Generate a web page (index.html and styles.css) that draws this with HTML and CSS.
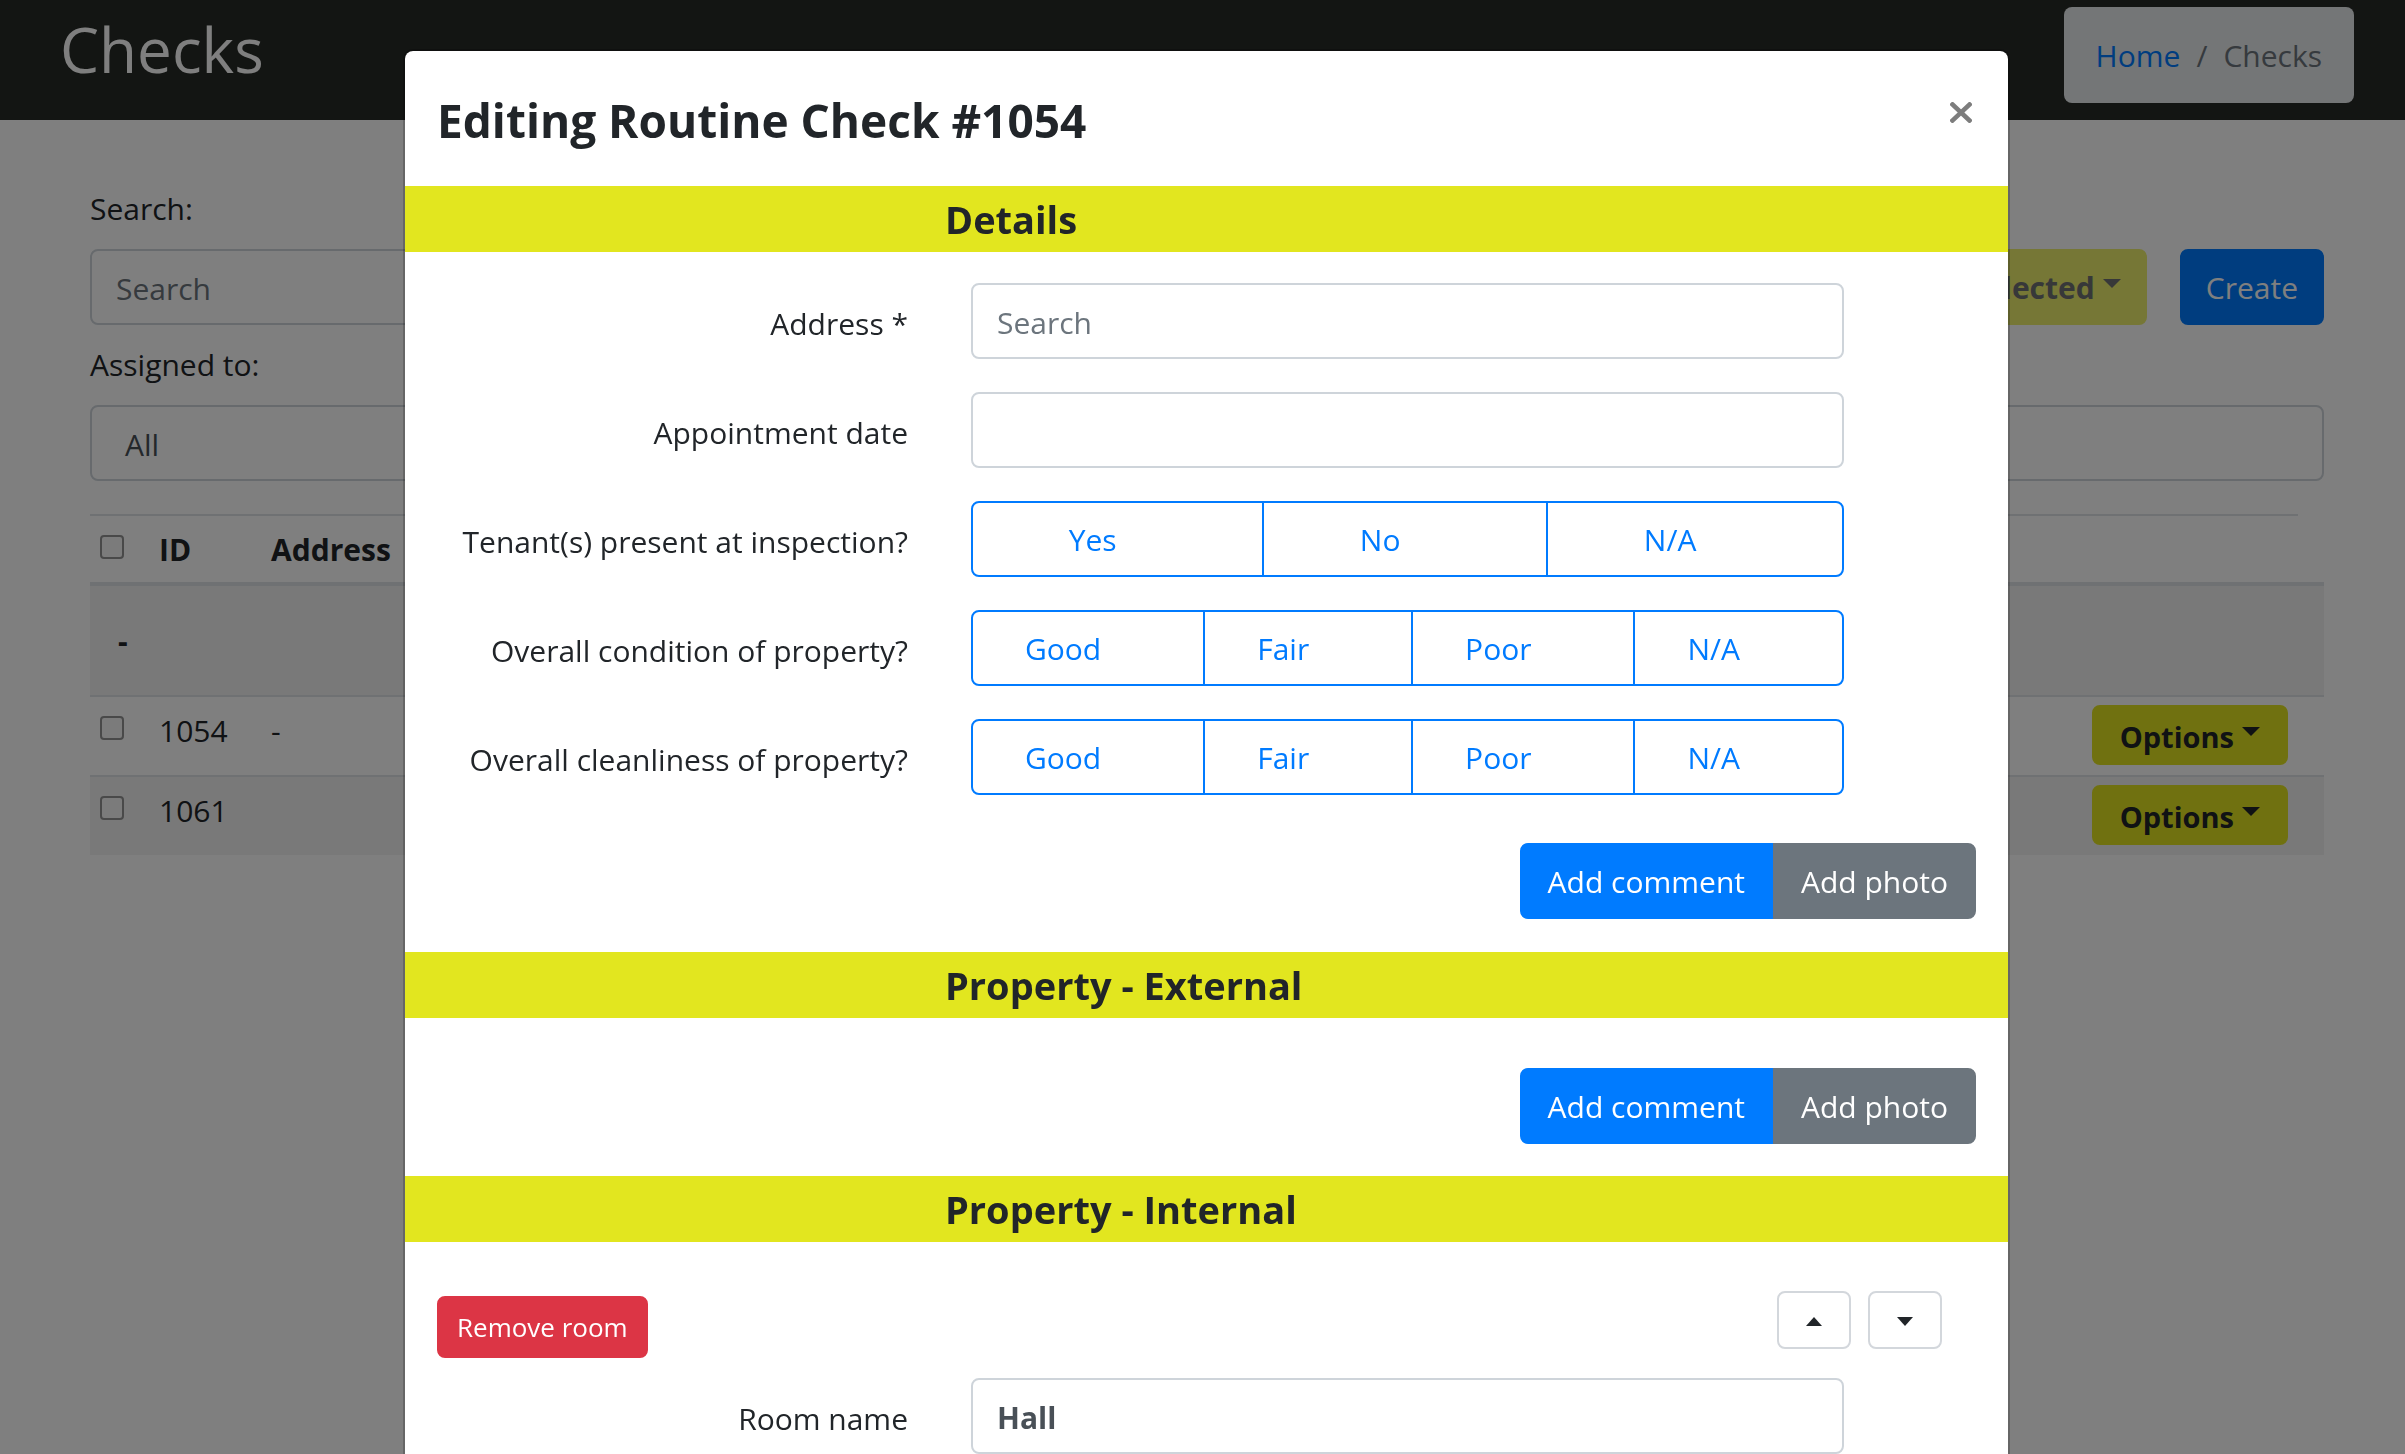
FILE: index.html
```html
<!DOCTYPE html>
<html lang="en">
<head>
<meta charset="utf-8">
<title>Checks</title>
<link rel="stylesheet" href="styles.css">
</head>
<body>
<div class="page">
  <nav class="navbar">
    <span class="brand">Checks</span>
    <ol class="breadcrumb">
      <li><a href="#">Home</a></li>
      <li class="sep">/</li>
      <li class="active">Checks</li>
    </ol>
  </nav>

  <main class="content">
    <div class="filters">
      <div class="search-col">
        <label class="field-label">Search:</label>
        <div class="form-control placeholder">Search</div>
      </div>
      <div class="actions">
        <button class="btn btn-yellow is-disabled">With selected<span class="caret"></span></button>
        <button class="btn btn-blue">Create</button>
      </div>
    </div>
    <label class="field-label assigned">Assigned to:</label>
    <div class="form-control select-box">All</div>

    <div class="table-rule"></div>
    <table class="checks-table">
      <colgroup>
        <col class="c-check"><col class="c-id"><col class="c-addr"><col><col class="c-opt">
      </colgroup>
      <thead>
        <tr><th><span class="checkbox"></span></th><th>ID</th><th>Address</th><th></th><th></th></tr>
      </thead>
      <tbody>
        <tr class="filter-row striped"><td class="dash">-</td><td></td><td></td><td></td><td></td></tr>
        <tr><td><span class="checkbox"></span></td><td>1054</td><td>-</td><td></td><td class="opt"><button class="btn-options">Options<span class="caret"></span></button></td></tr>
        <tr class="striped"><td><span class="checkbox"></span></td><td>1061</td><td></td><td></td><td class="opt"><button class="btn-options">Options<span class="caret"></span></button></td></tr>
      </tbody>
    </table>
  </main>
</div>

<div class="backdrop"></div>

<div class="modal">
  <div class="modal-header">
    <h4 class="modal-title">Editing Routine Check #1054</h4>
    <button class="close" aria-label="Close">
      <svg width="22" height="21" viewBox="0 0 22 21"><path d="M2.5 2.5 L19.5 18.5 M19.5 2.5 L2.5 18.5" stroke="#7d7d7d" stroke-width="4.5" stroke-linecap="square" fill="none"/></svg>
    </button>
  </div>

  <h5 class="band">Details</h5>
  <div class="section section-details">
    <div class="form-row">
      <label class="row-label">Address *</label>
      <div class="form-control placeholder">Search</div>
    </div>
    <div class="form-row">
      <label class="row-label">Appointment date</label>
      <div class="form-control"></div>
    </div>
    <div class="form-row">
      <label class="row-label">Tenant(s) present at inspection?</label>
      <div class="toggle-group">
        <span class="toggle">Yes</span><span class="toggle">No</span><span class="toggle">N/A</span>
      </div>
    </div>
    <div class="form-row">
      <label class="row-label">Overall condition of property?</label>
      <div class="toggle-group">
        <span class="toggle">Good</span><span class="toggle">Fair</span><span class="toggle">Poor</span><span class="toggle">N/A</span>
      </div>
    </div>
    <div class="form-row">
      <label class="row-label">Overall cleanliness of property?</label>
      <div class="toggle-group">
        <span class="toggle">Good</span><span class="toggle">Fair</span><span class="toggle">Poor</span><span class="toggle">N/A</span>
      </div>
    </div>
    <div class="btn-row">
      <div class="btn-group">
        <button class="btn btn-blue">Add comment</button><button class="btn btn-gray">Add photo</button>
      </div>
    </div>
  </div>

  <h5 class="band">Property - External</h5>
  <div class="section section-external">
    <div class="btn-row">
      <div class="btn-group">
        <button class="btn btn-blue">Add comment</button><button class="btn btn-gray">Add photo</button>
      </div>
    </div>
  </div>

  <h5 class="band">Property - Internal</h5>
  <div class="section section-internal">
    <div class="room-controls">
      <button class="btn btn-red">Remove room</button>
      <div class="move-btns">
        <button class="arrow-btn" aria-label="Move up"><span class="tri-up"></span></button>
        <button class="arrow-btn" aria-label="Move down"><span class="tri-down"></span></button>
      </div>
    </div>
    <div class="form-row room-row">
      <label class="row-label">Room name</label>
      <div class="form-control value-bold">Hall</div>
    </div>
  </div>
</div>
</body>
</html>
```

FILE: styles.css
```css
* { box-sizing: border-box; }

html, body {
  margin: 0;
  height: 100%;
  overflow: hidden;
}

body {
  font-family: "Open Sans", "Noto Sans", sans-serif;
  font-size: 30px;
  line-height: 48px;
  color: #212529;
  background: #fff;
}

button { font-family: inherit; }

/* ---------- navbar ---------- */
.navbar {
  height: 120px;
  background: #262a26;
  display: flex;
  justify-content: space-between;
  align-items: flex-start;
  padding: 0 51px 0 60px;
}
.brand {
  font-size: 62px;
  line-height: 62px;
  color: #fff;
  margin-top: 18px;
}
.breadcrumb {
  list-style: none;
  margin: 7px 0 0;
  padding: 25px 32px 23px;
  background: #e9ecef;
  border-radius: 8px;
  display: flex;
}
.breadcrumb a { color: #007bff; text-decoration: none; }
.breadcrumb .sep { color: #6c757d; padding: 0 16px; }
.breadcrumb .active { color: #6c757d; }

/* ---------- page content ---------- */
.content {
  margin: 0 81px 0 90px;
  padding-top: 65px;
}
.filters {
  display: flex;
  align-items: flex-end;
}
.search-col { flex: 1; }
.field-label {
  display: block;
  margin-bottom: 16px;
}
.assigned { margin-top: 16px; }

.form-control {
  display: flex;
  align-items: center;
  width: 100%;
  height: 76px;
  padding: 4px 24px 0;
  color: #495057;
  background: #fff;
  border: 2px solid #ced4da;
  border-radius: 8px;
}
.placeholder { color: #6c757d; }
.select-box { padding-left: 33px; }
.value-bold { font-weight: 700; }

.actions {
  display: flex;
  gap: 33px;
  margin-left: 32px;
}

.btn {
  display: inline-flex;
  align-items: center;
  justify-content: center;
  height: 76px;
  padding: 2px 24px 0;
  border: 2px solid transparent;
  border-radius: 8px;
  font-size: 30px;
  line-height: 48px;
  white-space: nowrap;
}
.btn-blue { background: #007bff; border-color: #007bff; color: #fff; }
.btn-gray { background: #6c757d; border-color: #6c757d; color: #fff; }
.btn-red {
  background: #dc3545;
  border-color: #dc3545;
  color: #fff;
  height: 62px;
  padding: 0 18px;
  font-size: 26px;
}
.btn-yellow {
  background: #e2e520;
  border-color: #e2e520;
  color: #212529;
  font-weight: 700;
}
.is-disabled { opacity: .65; }

.caret {
  display: inline-block;
  width: 0;
  height: 0;
  margin-left: 8px;
  border-top: 9px solid currentColor;
  border-left: 9.5px solid transparent;
  border-right: 9.5px solid transparent;
  position: relative;
  top: -5px;
}

/* ---------- table ---------- */
.table-rule {
  height: 2px;
  background: #dee2e6;
  margin: 33px 26px 0 0;
}
.checks-table {
  width: 100%;
  table-layout: fixed;
  border-collapse: separate;
  border-spacing: 0;
}
.c-check { width: 59px; }
.c-id { width: 112px; }
.c-addr { width: 400px; }
.c-opt { width: 320px; }

.checks-table th,
.checks-table td {
  padding: 10px 10px 8px;
  text-align: left;
  vertical-align: top;
  line-height: 48px;
}
.checks-table th {
  font-weight: 700;
  border-bottom: 4px solid #dee2e6;
}
.checks-table td { border-top: 2px solid #dee2e6; }
.checks-table .filter-row td {
  border-top: 0;
  height: 109px;
  padding-top: 0;
  padding-bottom: 0;
  vertical-align: middle;
}
.checks-table .dash {
  font-weight: 700;
  padding-left: 28px;
}
.striped td { background: #f2f2f2; }
.checks-table td.opt {
  text-align: right;
  padding-right: 36px;
  padding-top: 8px;
  padding-bottom: 10px;
}

.checkbox {
  display: inline-block;
  width: 24px;
  height: 24px;
  margin-top: 9px;
  vertical-align: top;
  border: 2px solid #939393;
  border-radius: 4px;
  background: #f6f6f6;
}

.btn-options {
  display: inline-flex;
  align-items: center;
  height: 60px;
  padding: 2px 26px 0;
  border: 2px solid #e0e220;
  border-radius: 8px;
  background: #e0e220;
  color: #212529;
  font-size: 29px;
  font-weight: 700;
}

/* ---------- backdrop + modal ---------- */
.backdrop {
  position: fixed;
  inset: 0;
  background: rgba(0, 0, 0, .5);
}

.modal {
  position: fixed;
  left: 403px;
  top: 49px;
  width: 1607px;
  height: 1500px;
  background: #fff;
  background-clip: padding-box;
  border: 2px solid rgba(0, 0, 0, .2);
  border-radius: 10px;
}

.modal-header {
  height: 135px;
  display: flex;
  justify-content: space-between;
  align-items: flex-start;
  padding: 39px 32px 0 32px;
}
.modal-title {
  margin: 0;
  font-size: 46px;
  line-height: 60px;
  font-weight: 700;
}
.close {
  margin: 12px 4px 0 0;
  padding: 0;
  border: 0;
  background: transparent;
  line-height: 0;
}

.band {
  margin: 0;
  height: 66px;
  background: #e2e61f;
  padding-left: 540px;
  font-size: 38px;
  line-height: 66px;
  font-weight: 700;
}

.section { padding: 0 32px; }
.section-details { padding-top: 31px; padding-bottom: 33px; }
.section-external { padding-top: 50px; padding-bottom: 32px; }
.section-internal { padding-top: 49px; }

.form-row {
  display: grid;
  grid-template-columns: 471px 873px;
  column-gap: 63px;
  margin-bottom: 33px;
}
.row-label {
  text-align: right;
  padding-top: 17px;
  white-space: nowrap;
}

.toggle-group {
  display: flex;
  width: 100%;
  height: 76px;
}
.toggle {
  flex: 1 1 auto;
  display: flex;
  align-items: center;
  justify-content: center;
  padding: 2px 24px 0;
  border: 2px solid #007bff;
  color: #007bff;
  background: #fff;
  margin-left: -2px;
  white-space: nowrap;
}
.toggle::after {
  content: "";
  flex: none;
  width: 50px;
}
.toggle:first-child { margin-left: 0; border-radius: 8px 0 0 8px; }
.toggle:last-child { border-radius: 0 8px 8px 0; }

.btn-row {
  display: flex;
  justify-content: flex-end;
}
.section-details .btn-row { padding-top: 15px; }
.btn-group { display: flex; }
.btn-group .btn { padding-left: 26px; padding-right: 26px; }
.btn-group .btn:first-child { border-radius: 8px 0 0 8px; }
.btn-group .btn:last-child { border-radius: 0 8px 8px 0; }

.room-controls {
  display: flex;
  justify-content: space-between;
  align-items: flex-start;
  height: 67px;
}
.room-controls .btn-red { margin-top: 5px; }
.move-btns {
  display: flex;
  gap: 17px;
  margin-right: 34px;
}
.arrow-btn {
  width: 74px;
  height: 58px;
  padding: 0;
  border: 2px solid #d3d7dc;
  border-radius: 8px;
  background: #fff;
  display: flex;
  align-items: center;
  justify-content: center;
}
.tri-up, .tri-down {
  width: 0;
  height: 0;
  border-left: 8.5px solid transparent;
  border-right: 8.5px solid transparent;
}
.tri-up { border-bottom: 9px solid #212529; margin-top: 3px; }
.tri-down { border-top: 9px solid #212529; margin-top: 3px; }

.room-row { margin-top: 20px; }
```
